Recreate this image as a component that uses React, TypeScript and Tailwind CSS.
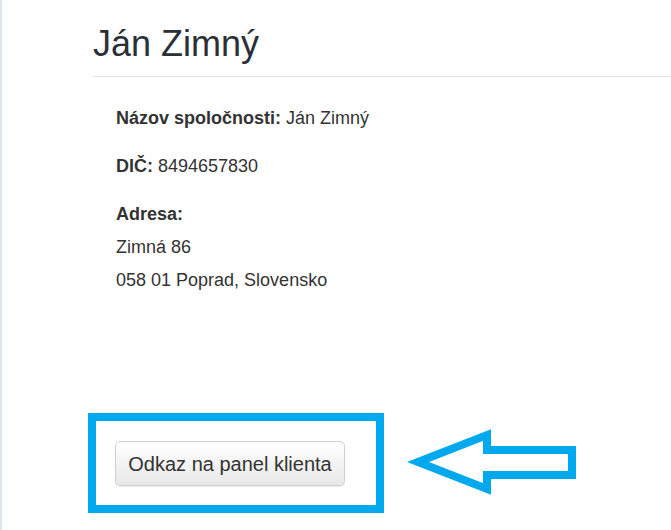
import React from "react";

const font = { fontFamily: '"Liberation Sans", Arial, sans-serif' };

const Row = ({ label, value }: { label: string; value: string }) => (
  <p className="leading-[33px] mb-[15px]">
    <b className="font-bold">{label}</b> {value}
  </p>
);

const App = () => {
  return (
    <div
      className="w-full h-[530px] bg-white border-l-2 border-[#dde6ef] overflow-hidden text-[#333]"
      style={font}
    >
      <div className="pl-[86px]">
        {/* header */}
        <div className="ml-[5px] pt-[24px] pb-[12px] border-b border-[#e5e5e5]">
          <h1 className="text-[36px] leading-[40px] text-[#2a2f38]">Ján Zimný</h1>
        </div>

        {/* client details */}
        <div className="pl-[28px] pt-[25px] text-[18px]">
          <Row label="Názov spoločnosti:" value="Ján Zimný" />
          <Row label="DIČ:" value="8494657830" />
          <div className="leading-[33px]">
            <p className="font-bold">Adresa:</p>
            <p>Zimná 86</p>
            <p>058 01 Poprad, Slovensko</p>
          </div>
        </div>

        {/* link to client panel, highlighted */}
        <div className="flex items-start mt-[116px]">
          <div className="w-[296px] h-[100px] border-[8px] border-[#00a9ee] pt-[20px] pl-[19px]">
            <button className="w-[230px] h-[45px] rounded-[5px] border border-[#d0d0d0] bg-gradient-to-b from-white to-[#e8e8e8] shadow-[0_1px_1px_rgba(0,0,0,0.08)] text-[20px] text-[#333]">
              Odkaz na panel klienta
            </button>
          </div>
          <svg
            className="ml-[20px] mt-[12px]"
            width="176"
            height="74"
            viewBox="0 0 176 74"
          >
            <polygon
              points="14,37 83,10 83,25 168,25 168,50 83,50 83,64"
              fill="none"
              stroke="#00a9ee"
              strokeWidth="8"
              strokeLinejoin="miter"
            />
          </svg>
        </div>
      </div>
    </div>
  );
};

export default App;
